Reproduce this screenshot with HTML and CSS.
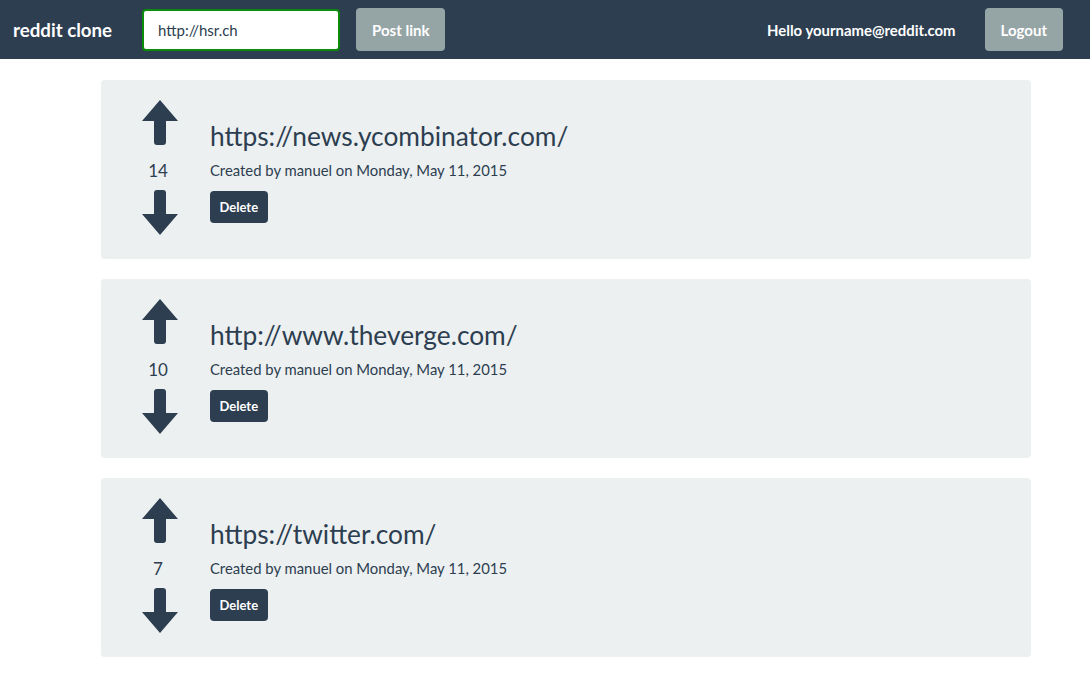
FILE: index.html
```html
<!DOCTYPE html>
<html>
<head>
<meta charset="utf-8">
<link rel="stylesheet" href="styles.css">
</head>
<body>
<nav class="navbar">
  <div class="brand">reddit clone</div>
  <form class="post-form">
    <input class="url-input" type="text" value="http://hsr.ch">
    <button class="btn btn-grey" type="button">Post link</button>
  </form>
  <div class="nav-right">
    <span class="hello">Hello yourname@reddit.com</span>
    <button class="btn btn-grey" type="button">Logout</button>
  </div>
</nav>
<main class="list">
  <div class="well">
    <div class="vote">
      <svg class="arrow" viewBox="0 0 36 46"><path d="M18 0 L36 21 L24 21 L24 42 Q24 45 21 45 L15 45 Q12 45 12 42 L12 21 L0 21 Z"/></svg>
      <div class="score">14</div>
      <svg class="arrow" viewBox="0 0 36 46"><path d="M18 46 L36 25 L24 25 L24 4 Q24 1 21 1 L15 1 Q12 1 12 4 L12 25 L0 25 Z"/></svg>
    </div>
    <div class="content">
      <div class="title">https://news.ycombinator.com/</div>
      <div class="meta">Created by manuel on Monday, May 11, 2015</div>
      <button class="btn btn-dark" type="button">Delete</button>
    </div>
  </div>
  <div class="well">
    <div class="vote">
      <svg class="arrow" viewBox="0 0 36 46"><path d="M18 0 L36 21 L24 21 L24 42 Q24 45 21 45 L15 45 Q12 45 12 42 L12 21 L0 21 Z"/></svg>
      <div class="score">10</div>
      <svg class="arrow" viewBox="0 0 36 46"><path d="M18 46 L36 25 L24 25 L24 4 Q24 1 21 1 L15 1 Q12 1 12 4 L12 25 L0 25 Z"/></svg>
    </div>
    <div class="content">
      <div class="title">http://www.theverge.com/</div>
      <div class="meta">Created by manuel on Monday, May 11, 2015</div>
      <button class="btn btn-dark" type="button">Delete</button>
    </div>
  </div>
  <div class="well">
    <div class="vote">
      <svg class="arrow" viewBox="0 0 36 46"><path d="M18 0 L36 21 L24 21 L24 42 Q24 45 21 45 L15 45 Q12 45 12 42 L12 21 L0 21 Z"/></svg>
      <div class="score">7</div>
      <svg class="arrow" viewBox="0 0 36 46"><path d="M18 46 L36 25 L24 25 L24 4 Q24 1 21 1 L15 1 Q12 1 12 4 L12 25 L0 25 Z"/></svg>
    </div>
    <div class="content">
      <div class="title">https://twitter.com/</div>
      <div class="meta">Created by manuel on Monday, May 11, 2015</div>
      <button class="btn btn-dark" type="button">Delete</button>
    </div>
  </div>
</main>
</body>
</html>
```

FILE: styles.css
```css
* { box-sizing: border-box; }
body {
  margin: 0;
  font-family: Lato, "Open Sans", sans-serif;
  color: #2c3e50;
  background: #fff;
  font-size: 15px;
}
.navbar {
  height: 59px;
  background: #2c3e50;
  display: flex;
  align-items: center;
  padding: 0 27px 0 13px;
}
.brand {
  color: #fff;
  font-size: 18.7px;
  font-weight: 700;
  margin-right: 30px;
}
.post-form {
  display: flex;
  align-items: center;
  gap: 16px;
}
.url-input {
  width: 198px;
  height: 42px;
  border: 2px solid #0c8a0c;
  border-radius: 4px;
  padding: 0 14px;
  font-family: Lato, sans-serif;
  font-size: 15px;
  color: #2c3e50;
  outline: none;
}
.nav-right {
  margin-left: auto;
  display: flex;
  align-items: center;
  gap: 29px;
}
.hello {
  color: #fff;
  font-weight: 700;
  font-size: 14.9px;
}
.btn {
  border: none;
  border-radius: 4px;
  font-family: Lato, sans-serif;
  font-weight: 700;
  color: #fff;
  cursor: pointer;
}
.btn-grey {
  background: #95a5a6;
  height: 43px;
  padding: 0 16px;
  font-size: 15px;
}
.btn-dark {
  background: #2c3e50;
  height: 32px;
  padding: 0 9.5px;
  font-size: 13px;
}
.list {
  width: 930px;
  margin-left: 101px;
  padding-top: 21px;
  display: flex;
  flex-direction: column;
  gap: 20px;
}
.well {
  background: #ecf0f1;
  border-radius: 4px;
  height: 179px;
  display: flex;
  padding: 20px 0 0 41px;
}
.vote {
  width: 36px;
  display: flex;
  flex-direction: column;
  align-items: center;
}
.arrow {
  width: 36px;
  height: 46px;
  fill: #2c3e50;
  display: block;
}
.score {
  font-size: 17px;
  line-height: 20px;
  margin: 15px 4px 8px 0;
}
.content {
  margin-left: 32px;
  padding-top: 19px;
}
.title {
  font-size: 26.3px;
  line-height: 34px;
}
.meta {
  font-size: 14.85px;
  line-height: 20px;
  margin-top: 7px;
  margin-bottom: 11px;
}
```
